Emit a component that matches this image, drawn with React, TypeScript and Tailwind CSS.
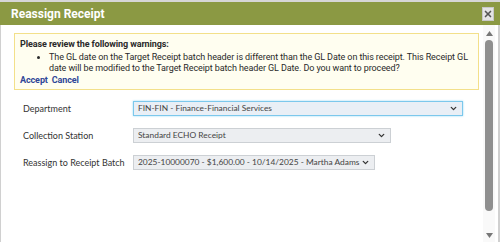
import { ChevronDown, X } from 'lucide-react'

function FakeSelect({ value, width, focused }: { value: string; width: string; focused?: boolean }) {
  return (
    <div
      className={`${width} h-[15px] flex items-center justify-between pl-[4px] pr-[4px] text-[8.4px] leading-none text-[#444] ${
        focused
          ? 'bg-[#e9eff6] border border-[#7cc8ec] shadow-[0_0_2px_#9ad8f4]'
          : 'bg-[#eceef1] border border-[#ccd0d4]'
      }`}
    >
      <span className="whitespace-nowrap">{value}</span>
      <ChevronDown className="size-[9px] shrink-0 text-[#333]" strokeWidth={3.5} />
    </div>
  )
}

export default function App() {
  return (
    <div className="w-[500px] h-[242px] bg-white overflow-hidden flex flex-col font-['Roboto',sans-serif]">
      {/* page behind the dialog */}
      <div className="h-[2px] bg-[#d6d6d6]" />

      {/* Title bar */}
      <div className="h-[23px] bg-[#8b9943] flex items-center justify-between pl-[11px] pr-[6px]">
        <span className="text-white font-bold text-[12px]">Reassign Receipt</span>
        <button className="w-[12px] h-[14px] bg-[#e4e4e4] border border-[#c8c8c8] flex items-center justify-center">
          <X className="size-[10px] text-[#555]" strokeWidth={4} />
        </button>
      </div>

      {/* Body */}
      <div className="flex-1 flex border-l border-r-2 border-[#d0d0d0]">
        <div className="flex-1 pl-[13px] pr-[4px] pt-[8px]">
          {/* Warnings */}
          <div className="bg-[#fffef0] border border-[#f3e08a] px-[5px] pt-[5px] pb-[3px] text-[9px] tracking-[-0.1px] leading-[11.5px] text-[#2a2a2a]">
            <p className="font-bold">Please review the following warnings:</p>
            <ul className="list-disc pl-[29px] mt-[1px]">
              <li>
                The GL date on the Target Receipt batch header is different than the GL Date on this receipt. This Receipt GL
                date will be modified to the Target Receipt batch header GL Date. Do you want to proceed?
              </li>
            </ul>
            <div className="flex gap-[4px] font-bold text-[#2f4797]">
              <span>Accept</span>
              <span>Cancel</span>
            </div>
          </div>

          {/* Form */}
          <div className="mt-[11px] pl-[9px] flex flex-col gap-[12px] font-['Lato',sans-serif] text-[9px] text-[#333]">
            <div className="flex items-center">
              <span className="w-[110px]">Department</span>
              <FakeSelect value="FIN-FIN - Finance-Financial Services" width="w-[330px]" focused />
            </div>
            <div className="flex items-center">
              <span className="w-[110px]">Collection Station</span>
              <FakeSelect value="Standard ECHO Receipt" width="w-[258px]" />
            </div>
            <div className="flex items-center">
              <span className="w-[110px]">Reassign to Receipt Batch</span>
              <FakeSelect value="2025-10000070 - $1,600.00 - 10/14/2025 - Martha Adams" width="w-[242px]" />
            </div>
          </div>
        </div>

        {/* Scrollbar */}
        <div className="w-[12px] bg-[#f9f9f9] flex flex-col items-center pt-[6px] pb-[4px] mr-[3px]">
          <svg width="7" height="5" viewBox="0 0 7 5">
            <path d="M3.5 0 L7 5 L0 5 Z" fill="#777" />
          </svg>
          <div className="w-[8px] flex-1 bg-[#8f8f8f] rounded-full mt-[4px] mb-[22px]" />
          <svg width="7" height="5" viewBox="0 0 7 5">
            <path d="M0 0 L7 0 L3.5 5 Z" fill="#777" />
          </svg>
        </div>
      </div>
    </div>
  )
}
